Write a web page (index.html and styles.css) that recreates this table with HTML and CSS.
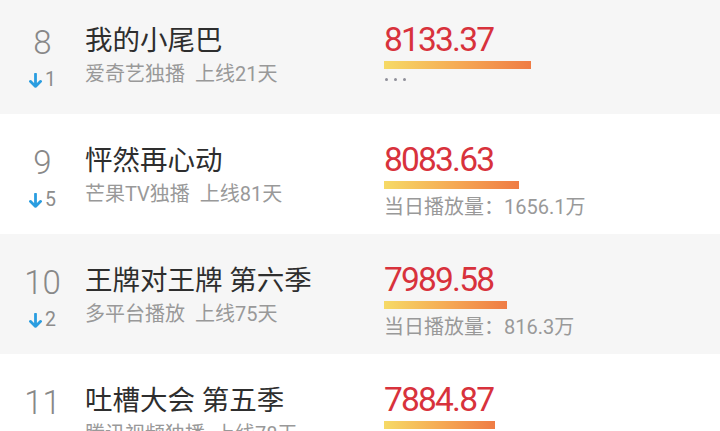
FILE: index.html
```html
<!DOCTYPE html>
<html lang="zh">
<head>
<meta charset="utf-8">
<title>榜单</title>
<link rel="stylesheet" href="styles.css">
</head>
<body>
<ul class="list">
  <li class="row gray">
    <div class="rank">
      <div class="num">8</div>
      <div class="change"><svg class="arrow" viewBox="0 0 12 14"><path d="M6 1V12.5M1.2 7.8L6 12.5L10.8 7.8"/></svg>1</div>
    </div>
    <div class="info">
      <div class="title">我的小尾巴</div>
      <div class="sub"><span>爱奇艺独播</span><span class="days">上线21天</span></div>
    </div>
    <div class="score">
      <div class="value">8133.37</div>
      <div class="bar" style="width:147px"></div>
      <div class="dots"><i></i><i></i><i></i></div>
    </div>
  </li>
  <li class="row">
    <div class="rank">
      <div class="num">9</div>
      <div class="change"><svg class="arrow" viewBox="0 0 12 14"><path d="M6 1V12.5M1.2 7.8L6 12.5L10.8 7.8"/></svg>5</div>
    </div>
    <div class="info">
      <div class="title">怦然再心动</div>
      <div class="sub"><span>芒果TV独播</span><span class="days">上线81天</span></div>
    </div>
    <div class="score">
      <div class="value">8083.63</div>
      <div class="bar" style="width:135px"></div>
      <div class="plays">当日播放量：1656.1万</div>
    </div>
  </li>
  <li class="row gray">
    <div class="rank">
      <div class="num">10</div>
      <div class="change"><svg class="arrow" viewBox="0 0 12 14"><path d="M6 1V12.5M1.2 7.8L6 12.5L10.8 7.8"/></svg>2</div>
    </div>
    <div class="info">
      <div class="title">王牌对王牌 第六季</div>
      <div class="sub"><span>多平台播放</span><span class="days">上线75天</span></div>
    </div>
    <div class="score">
      <div class="value">7989.58</div>
      <div class="bar" style="width:123px"></div>
      <div class="plays">当日播放量：816.3万</div>
    </div>
  </li>
  <li class="row">
    <div class="rank">
      <div class="num">11</div>
      <div class="change"><svg class="arrow" viewBox="0 0 12 14"><path d="M6 1V12.5M1.2 7.8L6 12.5L10.8 7.8"/></svg>1</div>
    </div>
    <div class="info">
      <div class="title">吐槽大会 第五季</div>
      <div class="sub"><span>腾讯视频独播</span><span class="days">上线78天</span></div>
    </div>
    <div class="score">
      <div class="value">7884.87</div>
      <div class="bar" style="width:111px"></div>
      <div class="plays">当日播放量：702.5万</div>
    </div>
  </li>
</ul>
</body>
</html>
```

FILE: styles.css
```css
html, body {
  margin: 0;
  padding: 0;
  background: #ffffff;
  overflow: hidden;
}
body {
  font-family: Roboto, "Noto Sans CJK SC", sans-serif;
}
.list {
  list-style: none;
  margin: -6px 0 0 0;
  padding: 0;
}
.row {
  display: flex;
  height: 120px;
  background: #ffffff;
}
.row.gray {
  background: #f6f6f6;
}
.rank {
  width: 85px;
  display: flex;
  flex-direction: column;
  align-items: center;
  padding-top: 31px;
}
.num {
  font-size: 33px;
  line-height: 36px;
  font-weight: 300;
  color: #888888;
}
.change {
  margin-top: 7px;
  display: flex;
  align-items: center;
  font-size: 19.5px;
  line-height: 24px;
  color: #8c8c8c;
}
.arrow {
  width: 13px;
  height: 15px;
  margin-right: 3px;
  margin-top: 1px;
  fill: none;
  stroke: #2a9de0;
  stroke-width: 2.6;
  stroke-linecap: round;
  stroke-linejoin: round;
}
.info {
  width: 299px;
  padding-top: 29px;
}
.title {
  font-size: 27.5px;
  line-height: 36px;
  color: #2e2e2e;
  white-space: nowrap;
}
.sub {
  margin-top: 2px;
  font-size: 20px;
  line-height: 26px;
  color: #999999;
  white-space: nowrap;
}
.days {
  margin-left: 10px;
}
.score {
  flex: 1;
  padding-top: 28px;
}
.value {
  font-size: 33.5px;
  line-height: 36px;
  color: #d8323c;
  letter-spacing: -1.8px;
}
.bar {
  margin-top: 3px;
  height: 8px;
  background: linear-gradient(90deg, #f6da66 0%, #f5a653 55%, #ef7c45 100%);
}
.plays {
  margin-top: 5px;
  font-size: 20px;
  line-height: 26px;
  color: #999999;
  white-space: nowrap;
}
.dots {
  display: flex;
  gap: 6px;
  margin-top: 9px;
  padding-left: 1px;
}
.dots i {
  display: block;
  width: 3px;
  height: 3px;
  border-radius: 50%;
  background: #8f8f99;
}
```
